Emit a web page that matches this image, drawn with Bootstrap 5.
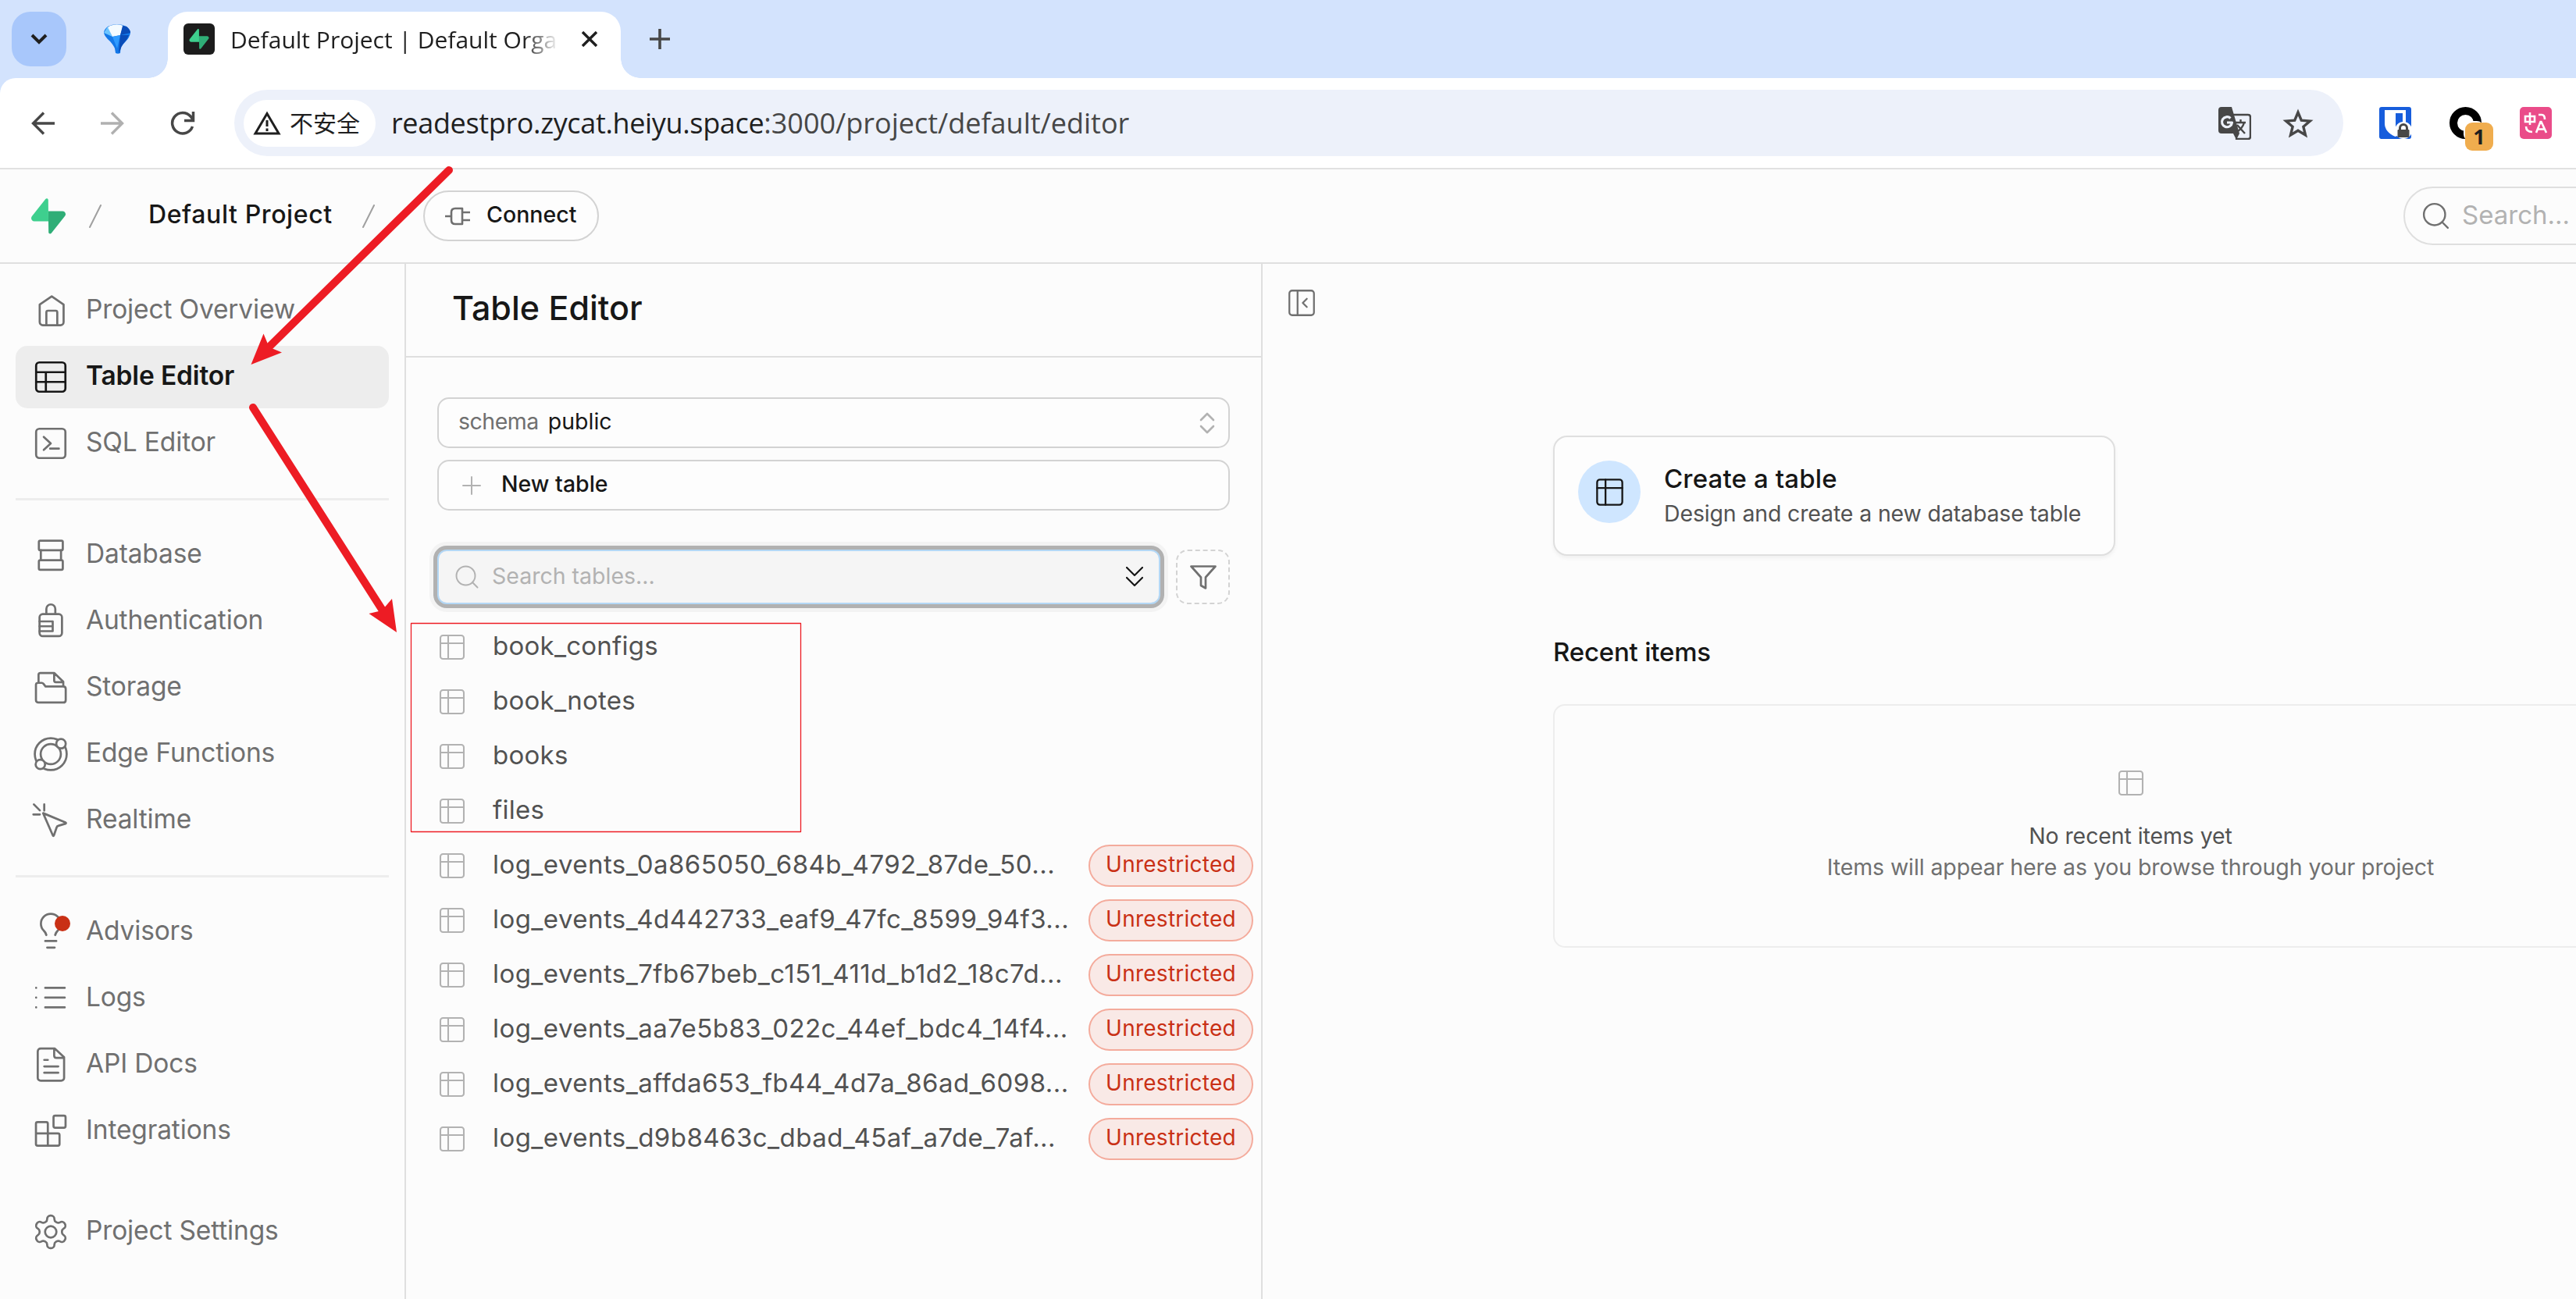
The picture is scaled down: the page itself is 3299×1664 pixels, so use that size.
<!DOCTYPE html>
<html lang="en">
<head>
    <meta charset="UTF-8">
    <meta name="viewport" content="width=device-width, initial-scale=1.0">
    <title>Default Project | Default Organization | Supabase</title>
    <link href="https://cdn.jsdelivr.net/npm/bootstrap@5.3.0/dist/css/bootstrap.min.css" rel="stylesheet">
    <style>
        body {
            margin: 0;
            font-family: Inter, "Noto Sans", "Noto Sans CJK SC", sans-serif;
            font-size: 33px;
            line-height: 1.2;
            color: #171717;
            background: #fcfcfc;
            overflow: hidden;
        }

        svg {
            display: block;
            flex: none;
            fill: none;
        }

        svg:not([stroke]) {
            stroke: currentColor;
        }

        /* Round line ends unless the icon asks for sharp ones */
        svg:not([stroke-linecap]) {
            stroke-linecap: round;
        }

        svg:not([stroke-linejoin]) {
            stroke-linejoin: round;
        }

        .browser-text {
            font-family: "Open Sans", "Noto Sans CJK SC", sans-serif;
        }

        /* Browser tab strip */
        .tab-strip {
            height: 100px;
            background: #d3e3fd;
            padding: 15px 0 0 15px;
        }

        .tab-menu {
            width: 70px;
            height: 70px;
            border-radius: 24px;
            background: #a8c7fb;
            color: #1f1f1f;
        }

        .pinned-tab {
            width: 130px;
            height: 70px;
        }

        .active-tab {
            position: relative;
            width: 580px;
            height: 85px;
            padding: 0 30px 15px 20px;
            background: #fff;
            border-radius: 25px 25px 0 0;
        }

        .active-tab::before,
        .active-tab::after {
            content: "";
            position: absolute;
            bottom: 0;
            width: 25px;
            height: 25px;
        }

        .active-tab::before {
            left: -25px;
            background: radial-gradient(circle at 0 0, transparent 24.5px, #fff 25px);
        }

        .active-tab::after {
            right: -25px;
            background: radial-gradient(circle at 100% 0, transparent 24.5px, #fff 25px);
        }

        .fav-box {
            width: 40px;
            height: 40px;
            border-radius: 6px;
            background: #1c1c1c;
        }

        .tab-title {
            width: 426px;
            margin-left: 20px;
            padding-top: 2px;
            font-size: 30px;
            white-space: nowrap;
            color: #1f1f1f;
            -webkit-mask-image: linear-gradient(90deg, #000 375px, transparent 421px);
            mask-image: linear-gradient(90deg, #000 375px, transparent 421px);
        }

        .new-tab {
            margin-left: 37px;
            height: 70px;
            color: #474747;
        }

        /* Browser toolbar */
        .tool-wrap {
            background: #d3e3fd;
        }

        .tool-row {
            height: 117px;
            padding: 15px 31px 15px 40px;
            background: #fff;
            border-top-left-radius: 20px;
            border-bottom: 2px solid #e1e1e1;
            color: #474747;
        }

        .nav-keys {
            gap: 59px;
        }

        .address {
            width: 2701px;
            height: 85px;
            margin-left: 50px;
            padding: 0 38px 0 12px;
            border-radius: 43px;
            background: #edf1fa;
        }

        .unsafe-chip {
            width: 169px;
            height: 60px;
            padding-left: 12px;
            gap: 11px;
            border-radius: 30px;
            background: #fff;
            color: #1f1f1f;
            font-size: 30px;
        }

        .url-text {
            margin-left: 20px;
            font-size: 36px;
            white-space: nowrap;
        }

        .url-host {
            color: #1f1f1f;
            letter-spacing: -.35px;
        }

        .ext-list {
            gap: 49px;
        }

        .ext-count {
            position: absolute;
            left: 20px;
            top: 20px;
            width: 36px;
            height: 36px;
            border-radius: 9px;
            background: #f0ad4e;
            color: #1f1f1f;
            font-size: 27px;
            line-height: 35px;
        }

        /* Application header */
        .app-header {
            height: 121px;
            padding-left: 40px;
            border-bottom: 2px solid #dfdfdf;
        }

        .first-slash {
            margin-left: 30px;
        }

        .medium-text {
            font-weight: 450;
        }

        .label-up {
            padding-bottom: 2px;
        }

        .project-name {
            margin: 0 38px 0 60px;
            font-size: 32px;
            letter-spacing: .6px;
        }

        .connect-btn {
            width: 225px;
            height: 65px;
            margin-left: 62px;
            gap: 20px;
            border: 2px solid #d3d3d3;
            border-radius: 33px;
            font-size: 28.5px;
            background: #fdfdfd;
        }

        .global-search {
            width: 300px;
            height: 75px;
            margin-right: -79px;
            padding-left: 19px;
            gap: 13px;
            border: 2px solid #dfdfdf;
            border-radius: 38px;
            color: #b2b2b2;
        }

        /* Sidebar */
        .side-menu {
            width: 520px;
            padding: 20px;
            border-right: 2px solid #dfdfdf;
            color: #707070;
            font-size: 33.5px;
            letter-spacing: -.15px;
        }

        .side-item {
            height: 80px;
            margin-bottom: 5px;
            padding-left: 20px;
            gap: 20px;
            border-radius: 15px;
        }

        .side-item svg {
            width: 50px;
            height: 50px;
            stroke-width: 1.3;
        }

        .side-item span {
            padding-bottom: 3px;
        }

        .side-item.current {
            background: #ededed;
            color: #171717;
            font-weight: 600;
        }

        .side-line {
            height: 2.5px;
            margin: 30px 0 30.5px;
            background: #ededed;
        }

        .side-gap {
            height: 44px;
        }

        /* Table list */
        .table-panel {
            width: 1097px;
            border-right: 2px solid #dfdfdf;
        }

        .panel-title {
            height: 120px;
            padding: 0 0 5px 59px;
            border-bottom: 2px solid #dfdfdf;
            font-size: 43px;
            font-weight: 500;
        }

        .panel-tools {
            padding: 51px 40px 0;
            font-size: 28.5px;
        }

        .line-box {
            height: 65px;
            margin-bottom: 15px;
            padding: 0 17px 0 25px;
            border: 2px solid #d3d3d3;
            border-radius: 15px;
            background: #fdfdfd;
        }

        .schema-word {
            color: #707070;
            letter-spacing: -.5px;
        }

        .new-table {
            padding-left: 30px;
            gap: 26px;
        }

        .search-line {
            margin-top: 50px;
        }

        .search-box {
            width: 926px;
            height: 70px;
            padding: 0 20px 0 18px;
            border: 2px solid #b3d7f5;
            border-radius: 12px;
            background: #f5f5f5;
            box-shadow: 0 0 0 5px #b1b1b1, 0 0 0 10px #f3f3f3;
            color: #b2b2b2;
        }

        .search-box span {
            margin-left: 14px;
        }

        .filter-btn {
            width: 69px;
            height: 70px;
            border: 2px dashed #d3d3d3;
            border-radius: 15px;
            color: #707070;
        }

        .table-list {
            margin-top: 20px;
            color: #525252;
            letter-spacing: .25px;
        }

        .table-row-item {
            height: 70px;
            padding: 0 10px 0 39px;
        }

        .table-row-item svg {
            width: 40px;
            height: 40px;
            margin-right: 32px;
            color: #b2b2b2;
            stroke-width: 1.25;
        }

        .log-name {
            letter-spacing: .45px;
        }

        .open-badge {
            width: 211px;
            height: 54px;
            border: 2px solid #f4ab9c;
            border-radius: 27px;
            background: #f9e9e6;
            color: #c93015;
            font-size: 28px;
        }

        /* Main area */
        .main-area {
            padding: 220px 0 0 372px;
        }

        .panel-toggle {
            position: absolute;
            left: 29px;
            top: 29px;
            color: #707070;
        }

        .create-card {
            width: 720px;
            height: 154px;
            padding: 30px 0 0 30px;
            gap: 30px;
            border: 2px solid #dfdfdf;
            border-radius: 18px;
            box-shadow: 0 3px 5px rgba(0, 0, 0, .05);
            background: #fdfdfd;
        }

        .round-icon {
            width: 80px;
            height: 80px;
            background: #cfe6ff;
        }

        .card-head {
            line-height: 46px;
            letter-spacing: .15px;
        }

        .soft-text {
            font-size: 28.5px;
            line-height: 40px;
            color: #525252;
            letter-spacing: -.1px;
        }

        .card-note {
            padding-top: 2px;
            letter-spacing: -.15px;
        }

        .recent-head {
            margin-top: 103px;
            line-height: 40px;
            letter-spacing: -.2px;
        }

        .recent-box {
            width: 1479px;
            height: 312px;
            margin-top: 47px;
            padding-top: 79px;
            border: 2px solid #ededed;
            border-radius: 15px;
        }

        .recent-empty {
            margin-top: 28px;
        }

        .hint-text {
            color: #707070;
        }

        /* Pointers drawn over the page */
        .annotations {
            position: absolute;
            left: 0;
            top: 0;
        }
    </style>
</head>
<body>
    <svg width="0" height="0" class="position-absolute">
        <symbol id="grid-icon" viewBox="0 0 24 24">
            <rect x="3" y="3" width="18" height="18" rx="2"/>
            <path d="M3 9h18M9 3v18"/>
        </symbol>
        <symbol id="bolt-logo" viewBox="0 0 109 113">
            <path fill="#2fae77" stroke="none" d="M63.7 110.3c-2.9 3.6-8.7 1.6-8.7-3L54 40.1h45.2c8.2 0 12.8 9.4 7.7 15.8z"/>
            <path fill="#3ecf8e" stroke="none" d="M45.3 2.1c2.9-3.6 8.7-1.7 8.7 2.9l.5 67.3H9.8c-8.2 0-12.7-9.5-7.6-15.9z"/>
        </symbol>
        <symbol id="find-icon" viewBox="0 0 24 24">
            <circle cx="11" cy="11" r="8"/>
            <path d="m21 21-4.3-4.3"/>
        </symbol>
    </svg>

    <div class="d-flex flex-column vh-100 overflow-hidden">
        <!-- Tab strip -->
        <div class="tab-strip browser-text d-flex align-items-start">
            <div class="tab-menu d-flex align-items-center justify-content-center">
                <svg width="22" height="14" viewBox="0 0 22 14" stroke-width="4" stroke-linecap="butt" stroke-linejoin="miter"><path d="m2 2 9 9 9-9"/></svg>
            </div>
            <div class="pinned-tab d-flex align-items-center justify-content-center">
                <svg width="36" height="38" viewBox="0 0 36 38" stroke="none">
                    <path fill="#1478e8" d="M6 3q6-3 12-3t12 3q5 4 5 8-1 6-6 11-6 6-6.500 9L22 37q-3 1.500-6 0l-1-6q-1-3-6-9Q2 16 1 11q0-4 5-8z"/>
                    <path fill="#6cc5ff" d="m6 3 6 13L1 11z"/>
                    <path fill="#f4fbff" d="M9 2q9-3.500 17 0l-4 12-10 2L6 4z"/>
                    <path fill="#0a4cb8" d="m22 14 11 0q-2 6-7 11-3 4-3.500 7L20 37zM30 3q5 4 5 8l-13 3 3-12z"/>
                    <path fill="#2f9bff" d="m12 16 10-2-4 17z"/>
                </svg>
            </div>
            <div class="active-tab d-flex align-items-center">
                <div class="fav-box d-flex align-items-center justify-content-center">
                    <svg width="26" height="26"><use href="#bolt-logo"/></svg>
                </div>
                <div class="tab-title">Default Project | Default Orga</div>
                <svg class="ms-auto" width="20" height="20" viewBox="0 0 20 20" stroke="#1f1f1f" stroke-width="3.400" stroke-linecap="butt"><path d="M1 1l18 18M19 1 1 19"/></svg>
            </div>
            <div class="new-tab d-flex align-items-center">
                <svg width="26" height="26" viewBox="0 0 26 26" stroke-width="3.600" stroke-linecap="butt"><path d="M13 0v26M0 13h26"/></svg>
            </div>
        </div>

        <!-- Address bar -->
        <div class="tool-wrap">
            <div class="tool-row browser-text d-flex align-items-center">
                <div class="nav-keys d-flex align-items-center">
                    <svg width="30" height="30" viewBox="0 0 30 30" stroke-width="3.400" stroke-linecap="butt" stroke-linejoin="miter"><path d="M30 15H3M16 1.500 2.500 15 16 28.500"/></svg>
                    <svg width="30" height="30" viewBox="0 0 30 30" stroke="#b0b0b0" stroke-width="3.400" stroke-linecap="butt" stroke-linejoin="miter"><path d="M0 15h27M14 1.500 27.500 15 14 28.500"/></svg>
                    <svg width="32" height="32" viewBox="0 0 32 32" stroke-width="3.500" stroke-linecap="butt" stroke-linejoin="miter"><path d="M28.500 20A13.300 13.300 0 1 1 26 7l3 4M29.500 1v11.500H18"/></svg>
                </div>

                <div class="address d-flex align-items-center">
                    <div class="unsafe-chip d-flex align-items-center">
                        <svg width="36" height="32" viewBox="0 0 36 32" stroke-width="3" stroke-linejoin="miter" stroke-linecap="butt"><path d="M18 3.500 33 29H3zM18 12v8M18 22.500v3.500"/></svg>
                        <span>不安全</span>
                    </div>
                    <div class="url-text"><span class="url-host">readestpro.zycat.heiyu.space</span>:3000/project/default/editor</div>
                    <div class="ms-auto d-flex align-items-center gap-4">
                        <svg width="42" height="42" viewBox="0 0 42 42" stroke="none" class="me-3">
                            <path fill="#474747" d="M4 0h13l10 34-4 8-4-8H4q-4 0-4-4V4q0-4 4-4z"/>
                            <path stroke="#474747" stroke-width="2.500" d="M19 10h19q3 0 3 3v25q0 3-3 3H23"/>
                            <path stroke="#edf1fa" stroke-width="3.200" stroke-linecap="butt" d="M15.500 14.500A6.500 6.500 0 1 0 17.500 20H11"/>
                            <path stroke="#474747" stroke-width="2.400" stroke-linecap="butt" d="M22 20h13M28.500 16v4M33 20q-2 8-11 13M24 23l10 11"/>
                        </svg>
                        <svg width="40" height="38" viewBox="0 0 40 38" stroke-width="3.400" stroke-linejoin="miter"><path d="m20 5 4.300 10.200 11 .9-8.400 7.200 2.600 10.700L20 28.300 10.500 34l2.600-10.700-8.400-7.200 11-.9z"/></svg>
                    </div>
                </div>

                <div class="ext-list d-flex ms-auto">
                    <svg width="41" height="41" viewBox="0 0 41 41" stroke="none">
                        <rect width="41" height="41" rx="3" fill="#175ddc"/>
                        <path fill="#fff" d="M7 4h27v17q0 12-13.500 17Q7 32 7 21z"/>
                        <path fill="#175ddc" d="M21 8h9v13q0 7-9 12z"/>
                        <circle cx="31" cy="30" r="11" fill="#fff"/>
                        <path stroke="#474747" stroke-width="3" d="M26.500 30v-3a4.500 4.500 0 0 1 9 0v3"/>
                        <rect x="23.500" y="29" width="15" height="10" rx="1" fill="#474747"/>
                    </svg>
                    <div class="position-relative">
                        <svg width="41" height="41" viewBox="0 0 41 41"><circle cx="20.500" cy="20.500" r="15.500" stroke="#000" stroke-width="10"/><rect x="18" y="18" width="26" height="26" rx="9" fill="#fff" stroke="none"/></svg>
                        <div class="ext-count text-center fw-bold">1</div>
                    </div>
                    <svg width="41" height="41" viewBox="0 0 41 41" stroke="#fff" stroke-width="2.600" stroke-linecap="butt" stroke-linejoin="miter">
                        <rect width="41" height="41" rx="5" fill="#ea4c89" stroke="none"/>
                        <path d="M7 12h12v7H7zM13 7v16M24 10h4q4 0 4 6M8 25q0 7 8 7M21 33l5.500-14h1L34 33M23 28.500h9"/>
                    </svg>
                </div>
            </div>
        </div>

        <!-- Application header -->
        <header class="app-header d-flex align-items-center">
            <svg width="44" height="46"><use href="#bolt-logo"/></svg>
            <svg class="first-slash" width="16" height="30" viewBox="0 0 16 30" stroke="#a0a0a0" stroke-width="2"><path d="M15 1 1 29"/></svg>
            <div class="project-name medium-text label-up">Default Project</div>
            <svg width="16" height="30" viewBox="0 0 16 30" stroke="#a0a0a0" stroke-width="2"><path d="M15 1 1 29"/></svg>
            <div class="connect-btn medium-text d-flex align-items-center justify-content-center">
                <svg width="33" height="24" viewBox="0 0 33 24" stroke="#707070" stroke-width="2.600" stroke-linecap="butt"><path d="M0 12h8M22 2H13q-5 0-5 5v10q0 5 5 5h9zM22 7h10M22 17h10"/></svg>
                <span class="label-up">Connect</span>
            </div>
            <div class="global-search d-flex align-items-center ms-auto">
                <svg width="41" height="41" stroke-width="1.400" stroke="#707070"><use href="#find-icon"/></svg>
                <span class="label-up">Search...</span>
            </div>
        </header>

        <div class="d-flex flex-grow-1">
            <!-- Sidebar -->
            <nav class="side-menu flex-shrink-0">
                <div class="side-item d-flex align-items-center">
                    <svg viewBox="0 0 24 24"><path d="M12.600 3.200 19.900 8.200V19a1.900 1.900 0 0 1-1.900 1.900H7.100A1.900 1.900 0 0 1 5.200 19V8.200zM9.300 20.900V13a1 1 0 0 1 1-1H15a1 1 0 0 1 1 1v7.900"/></svg>
                    <span>Project Overview</span>
                </div>
                <div class="side-item current d-flex align-items-center">
                    <svg viewBox="0 0 24 24"><rect x="3" y="3" width="18" height="18" rx="2"/><path d="M3 9h18M3 15h18M9 9v12"/></svg>
                    <span>Table Editor</span>
                </div>
                <div class="side-item d-flex align-items-center">
                    <svg viewBox="0 0 24 24"><rect x="3" y="3" width="18" height="18" rx="2"/><path d="m7.700 8 4.300 4-4.300 4M11.600 15.200H17"/></svg>
                    <span>SQL Editor</span>
                </div>
                <div class="side-line"></div>
                <div class="side-item d-flex align-items-center">
                    <svg viewBox="0 0 24 24"><rect x="4.700" y="3.200" width="14.700" height="5.900" rx=".8"/><rect x="4.700" y="15.200" width="14.700" height="5.900" rx=".8"/><path d="M5.900 9.100v6.100M18.300 9.100v6.100"/></svg>
                    <span>Database</span>
                </div>
                <div class="side-item d-flex align-items-center">
                    <svg viewBox="0 0 24 24"><rect x="5.100" y="7.500" width="13.800" height="13.600" rx="2"/><path d="M9.300 7.500V4.300a2.750 2.750 0 0 1 5.500 0v3.200M5.100 12h8.100v6H5.100M5.100 15h8"/></svg>
                    <span>Authentication</span>
                </div>
                <div class="side-item d-flex align-items-center">
                    <svg viewBox="0 0 24 24"><path d="M2.900 10.200a1.200 1.200 0 0 1 1.200-1.200h2.400q.6 0 1 .5l1.300 1.700h10.900q1.500 0 1.500 1.500v6.800q0 1.600-1.600 1.600H4.500q-1.600 0-1.600-1.600zM4.500 9V4q0-1.100 1.100-1.100h8.500l5.600 5.400v2.900M14.100 2.900v4.700q0 1 1 1h4.600"/></svg>
                    <span>Storage</span>
                </div>
                <div class="side-item d-flex align-items-center">
                    <svg viewBox="0 0 24 24"><circle cx="12" cy="12" r="9.800"/><circle cx="12" cy="12" r="6.200"/><circle cx="18.300" cy="5.600" r="2.900" fill="#fcfcfc"/><circle cx="5.600" cy="18.300" r="2.900" fill="#fcfcfc"/></svg>
                    <span>Edge Functions</span>
                </div>
                <div class="side-item d-flex align-items-center">
                    <svg viewBox="0 0 24 24"><path d="M7.300 7.500 21 13.200q.8.400 0 .8l-4.400 1.300q-.8.200-1 1L14 21q-.4 1-.8 0zM1.600 2.100l3.700 3.700M8 2.100v3.800M1.300 8.300h4"/></svg>
                    <span>Realtime</span>
                </div>
                <div class="side-line"></div>
                <div class="side-item d-flex align-items-center">
                    <svg viewBox="0 0 24 24"><path d="M9.300 13.800q-.5-1.700-1.600-2.700a6.050 6.050 0 1 1 8.600 0q-1.100 1-1.600 2.700M8.600 17.500h6.800M9.800 21.500h4.600"/><circle cx="19.200" cy="6.700" r="4.800" fill="#c93015" stroke="none"/></svg>
                    <span>Advisors</span>
                </div>
                <div class="side-item d-flex align-items-center">
                    <svg viewBox="0 0 24 24"><path d="M8.600 5.500h12M8.600 11.500h12M8.600 17.500h12M3 5.500h.01M3 11.500h.01M3 17.500h.01"/></svg>
                    <span>Logs</span>
                </div>
                <div class="side-item d-flex align-items-center">
                    <svg viewBox="0 0 24 24"><path d="M14.500 2 20.200 7.300V20a1.800 1.800 0 0 1-1.800 1.800H5.800A1.800 1.800 0 0 1 4 20V3.800A1.800 1.800 0 0 1 5.800 2zM14.100 2v4.300q0 1.400 1.400 1.400h4.700M8 9h2.200M8 13h8.600M8 16.900h8.600"/></svg>
                    <span>API Docs</span>
                </div>
                <div class="side-item d-flex align-items-center">
                    <svg viewBox="0 0 24 24"><rect x="13.700" y="2.500" width="7.400" height="7.400" rx="1"/><path d="M10.200 20.900V7.400q0-1-1-1H3.900q-1 0-1 1v12.500q0 1 1 1h12.500q1 0 1-1v-5.500q0-1-1-1H2.900"/></svg>
                    <span>Integrations</span>
                </div>
                <div class="side-gap"></div>
                <div class="side-item d-flex align-items-center">
                    <svg viewBox="0 0 24 24"><path d="M12.220 2h-.44a2 2 0 0 0-2 2v.18a2 2 0 0 1-1 1.730l-.43.25a2 2 0 0 1-2 0l-.15-.08a2 2 0 0 0-2.730.730l-.22.38a2 2 0 0 0 .73 2.730l.15.1a2 2 0 0 1 1 1.720v.51a2 2 0 0 1-1 1.740l-.15.09a2 2 0 0 0-.73 2.730l.22.38a2 2 0 0 0 2.730.730l.15-.08a2 2 0 0 1 2 0l.43.25a2 2 0 0 1 1 1.730V20a2 2 0 0 0 2 2h.44a2 2 0 0 0 2-2v-.18a2 2 0 0 1 1-1.730l.43-.25a2 2 0 0 1 2 0l.15.08a2 2 0 0 0 2.730-.73l.22-.39a2 2 0 0 0-.73-2.730l-.15-.08a2 2 0 0 1-1-1.740v-.5a2 2 0 0 1 1-1.740l.15-.09a2 2 0 0 0 .73-2.730l-.22-.38a2 2 0 0 0-2.730-.73l-.15.08a2 2 0 0 1-2 0l-.43-.25a2 2 0 0 1-1-1.730V4a2 2 0 0 0-2-2z"/><circle cx="12" cy="12" r="3.500"/></svg>
                    <span>Project Settings</span>
                </div>
            </nav>

            <!-- Table list -->
            <section class="table-panel flex-shrink-0">
                <div class="panel-title d-flex align-items-center">Table Editor</div>
                <div class="panel-tools">
                    <div class="line-box d-flex align-items-center justify-content-between">
                        <div class="label-up"><span class="schema-word">schema</span> <span class="ms-1">public</span></div>
                        <svg width="20" height="28" viewBox="0 0 20 28" stroke="#b2b2b2" stroke-width="2.600"><path d="m2 10 8-8 8 8M2 18l8 8 8-8"/></svg>
                    </div>
                    <div class="line-box new-table d-flex align-items-center">
                        <svg width="24" height="24" viewBox="0 0 24 24" stroke="#b2b2b2" stroke-width="2"><path d="M12 1v22M1 12h22"/></svg>
                        <span class="label-up medium-text">New table</span>
                    </div>
                    <div class="search-line d-flex justify-content-between">
                        <div class="search-box d-flex align-items-center">
                            <svg width="36" height="36" stroke-width="1.300"><use href="#find-icon"/></svg>
                            <span class="label-up">Search tables...</span>
                            <svg class="ms-auto" width="22" height="26" viewBox="0 0 22 26" stroke="#171717" stroke-width="2.200"><path d="m1 1 10 10L21 1M1 14l10 10 10-10"/></svg>
                        </div>
                        <div class="filter-btn d-flex align-items-center justify-content-center">
                            <svg width="34" height="31" viewBox="0 0 34 31" stroke-width="2.700"><path d="M1.500 1.500h31l-12.500 14v14l-6-3.500V15.500z"/></svg>
                        </div>
                    </div>
                </div>

                <div class="table-list">
                    <div class="table-row-item d-flex align-items-center">
                        <svg><use href="#grid-icon"/></svg>
                        <span class="label-up">book_configs</span>
                    </div>
                    <div class="table-row-item d-flex align-items-center">
                        <svg><use href="#grid-icon"/></svg>
                        <span class="label-up">book_notes</span>
                    </div>
                    <div class="table-row-item d-flex align-items-center">
                        <svg><use href="#grid-icon"/></svg>
                        <span class="label-up">books</span>
                    </div>
                    <div class="table-row-item d-flex align-items-center">
                        <svg><use href="#grid-icon"/></svg>
                        <span class="label-up">files</span>
                    </div>
                    <div class="table-row-item d-flex align-items-center">
                        <svg><use href="#grid-icon"/></svg>
                        <span class="log-name label-up">log_events_0a865050_684b_4792_87de_50...</span>
                        <div class="open-badge d-flex align-items-center justify-content-center ms-auto"><span class="label-up">Unrestricted</span></div>
                    </div>
                    <div class="table-row-item d-flex align-items-center">
                        <svg><use href="#grid-icon"/></svg>
                        <span class="log-name label-up">log_events_4d442733_eaf9_47fc_8599_94f3...</span>
                        <div class="open-badge d-flex align-items-center justify-content-center ms-auto"><span class="label-up">Unrestricted</span></div>
                    </div>
                    <div class="table-row-item d-flex align-items-center">
                        <svg><use href="#grid-icon"/></svg>
                        <span class="log-name label-up">log_events_7fb67beb_c151_411d_b1d2_18c7d...</span>
                        <div class="open-badge d-flex align-items-center justify-content-center ms-auto"><span class="label-up">Unrestricted</span></div>
                    </div>
                    <div class="table-row-item d-flex align-items-center">
                        <svg><use href="#grid-icon"/></svg>
                        <span class="log-name label-up">log_events_aa7e5b83_022c_44ef_bdc4_14f4...</span>
                        <div class="open-badge d-flex align-items-center justify-content-center ms-auto"><span class="label-up">Unrestricted</span></div>
                    </div>
                    <div class="table-row-item d-flex align-items-center">
                        <svg><use href="#grid-icon"/></svg>
                        <span class="log-name label-up">log_events_affda653_fb44_4d7a_86ad_6098...</span>
                        <div class="open-badge d-flex align-items-center justify-content-center ms-auto"><span class="label-up">Unrestricted</span></div>
                    </div>
                    <div class="table-row-item d-flex align-items-center">
                        <svg><use href="#grid-icon"/></svg>
                        <span class="log-name label-up">log_events_d9b8463c_dbad_45af_a7de_7af...</span>
                        <div class="open-badge d-flex align-items-center justify-content-center ms-auto"><span class="label-up">Unrestricted</span></div>
                    </div>
                </div>
            </section>

            <!-- Main area -->
            <main class="main-area position-relative">
                <svg class="panel-toggle" width="42" height="42" viewBox="0 0 24 24" stroke-width="1.300"><rect x="3" y="3" width="18" height="18" rx="2"/><path d="M9 3v18M15.800 9l-3 3 3 3"/></svg>
                <div class="create-card d-flex">
                    <div class="round-icon rounded-circle d-flex align-items-center justify-content-center flex-shrink-0">
                        <svg width="43" height="43" stroke-width="1.300"><use href="#grid-icon"/></svg>
                    </div>
                    <div>
                        <div class="card-head medium-text">Create a table</div>
                        <div class="soft-text card-note">Design and create a new database table</div>
                    </div>
                </div>
                <div class="recent-head medium-text">Recent items</div>
                <div class="recent-box d-flex flex-column align-items-center">
                    <svg width="40" height="40" stroke="#b2b2b2" stroke-width="1.250"><use href="#grid-icon"/></svg>
                    <div class="soft-text recent-empty">No recent items yet</div>
                    <div class="soft-text hint-text">Items will appear here as you browse through your project</div>
                </div>
            </main>
        </div>
    </div>

    <!-- Red arrows and frame -->
    <svg class="annotations" width="3299" height="1664" viewBox="0 0 3299 1664" stroke="none">
        <path stroke="#ed1c24" stroke-width="10" d="M575 218 346 443M324 522l166 260"/>
        <path fill="#ed1c24" d="m321.500 467 16-39.500 5 12 6.500 7 12 5zM508 810l-6-43-9 10.500-8 5.500-12.500 3z"/>
        <rect x="526.500" y="798.500" width="499" height="267" stroke="#ed1c24" stroke-width="1.300"/>
    </svg>

    <script src="https://cdn.jsdelivr.net/npm/bootstrap@5.3.0/dist/js/bootstrap.bundle.min.js"></script>
</body>
</html>
